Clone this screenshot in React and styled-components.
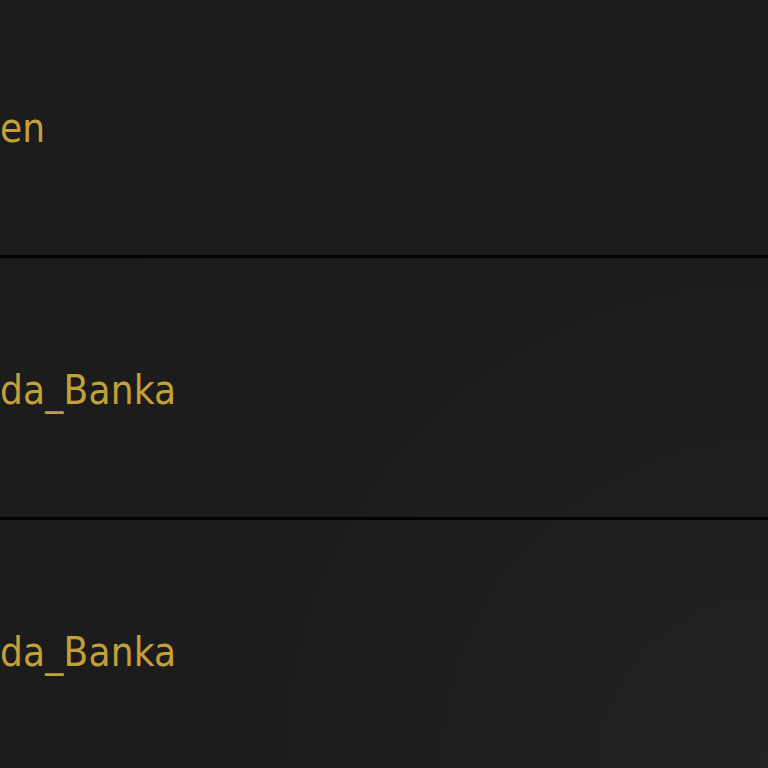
import styled, { createGlobalStyle } from "styled-components";

const GlobalStyle = createGlobalStyle`
  html, body {
    margin: 0;
    padding: 0;
    background: #1b1b1c;
    overflow: hidden;
  }
`;

const Page = styled.div`
  width: 768px;
  height: 768px;
  overflow: hidden;
  background: radial-gradient(circle at 100% 100%, #232325 0%, #1c1c1d 45%, #1b1b1c 100%);
`;

const List = styled.ul`
  list-style: none;
  margin: -4px 0 0 0;
  padding: 0;
`;

const Row = styled.li`
  box-sizing: border-box;
  height: 262px;
  padding-top: 4px;
  display: flex;
  align-items: center;
  border-bottom: 3px solid #030303;
`;

const Name = styled.span`
  font-family: "DejaVu Sans Condensed", "DejaVu Sans", sans-serif;
  font-size: 40px;
  color: #c4a138;
  letter-spacing: 0.2px;
  white-space: nowrap;
`;

const rows = ["en", "da_Banka", "da_Banka"];

const App = () => {
  return (
    <Page>
      <GlobalStyle />
      <List>
        {rows.map((name, i) => (
          <Row key={i}>
            <Name>{name}</Name>
          </Row>
        ))}
      </List>
    </Page>
  );
};

export default App;
